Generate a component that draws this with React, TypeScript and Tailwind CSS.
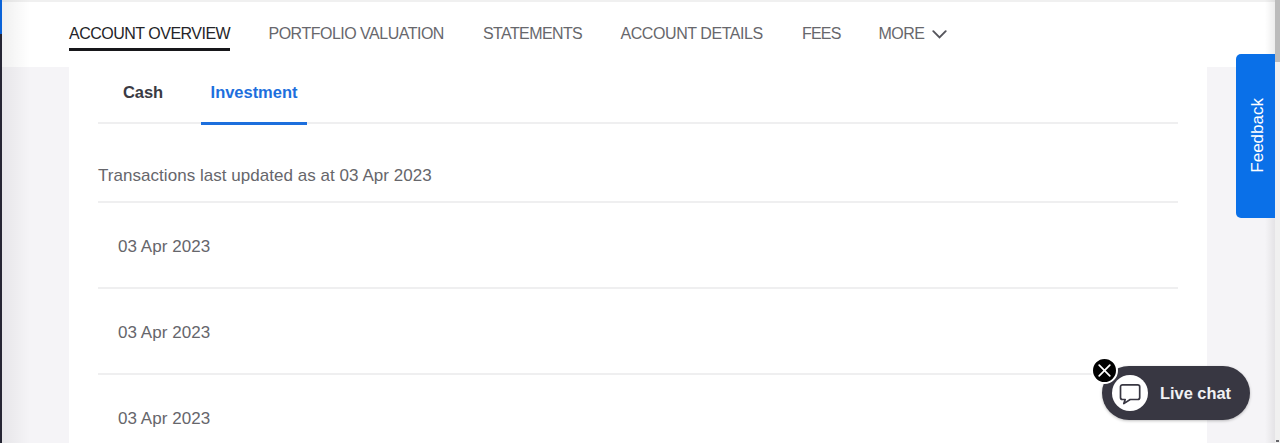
const navItems = [
  { label: "ACCOUNT OVERVIEW", style: "w-[161px] tracking-[-0.5px]" },
  { label: "PORTFOLIO VALUATION", style: "w-[176px] tracking-[-0.5px]" },
  { label: "STATEMENTS", style: "w-[99px] tracking-[-0.6px]" },
  { label: "ACCOUNT DETAILS", style: "w-[143px] tracking-[-0.43px]" },
  { label: "FEES", style: "w-[39px] tracking-[-0.8px]" },
];

const transactions = ["03 Apr 2023", "03 Apr 2023", "03 Apr 2023"];

const Header = () => (
  <header className="h-[67px] shrink-0 border-t-2 border-[#f0f0f0] bg-white pl-[69px]">
    <nav className="flex gap-[38.5px] pt-5 text-[16px] leading-6 text-[#67676c]">
      {navItems.map((item, i) => (
        <a
          key={item.label}
          className={`h-[29px] whitespace-nowrap ${item.style} ${
            i === 0 ? "border-b-3 border-[#17171a] text-[#242428]" : ""
          }`}
        >
          {item.label}
        </a>
      ))}
      <button className="-ml-px flex h-6 items-center gap-[7px] tracking-[-0.5px]">
        MORE
        <svg
          width="15"
          height="9"
          viewBox="0 0 15 9"
          fill="none"
          stroke="#55555c"
          strokeWidth="1.9"
          strokeLinecap="round"
        >
          <path d="M1.300 1.200 7.500 7.500l6.200-6.300" />
        </svg>
      </button>
    </nav>
  </header>
);

const Tabs = () => (
  <div className="flex h-[57px] border-b-2 border-[#efeff0] text-[16.5px] font-bold tracking-[-0.1px]">
    <button className="flex h-[57px] w-[103px] justify-start pl-[25px] pt-[13px] leading-6 text-[#3a3a43]">
      Cash
    </button>
    <button className="flex h-[58px] w-[106px] justify-center border-b-3 border-[#1d6fdd] pt-[13px] leading-6 tracking-[-0.03px] text-[#1d6fdd]">
      Investment
    </button>
  </div>
);

const Feedback = () => (
  <button className="absolute right-[5px] top-[54px] flex h-[164px] w-[39px] items-center justify-center rounded-l-[5px] bg-[#0a70e8] pl-1 text-white">
    <span className="rotate-180 pt-[2px] text-[17px] leading-5 [writing-mode:vertical-rl]">
      Feedback
    </span>
  </button>
);

const LiveChat = () => (
  <div className="absolute left-[1102px] top-[366px] flex h-[54px] w-[148px] items-center rounded-full bg-[#383742] pl-[10px] shadow-[0_1px_3px_rgba(0,0,0,0.25)]">
    <div className="flex h-9 w-9 items-center justify-center rounded-full bg-white">
      <svg
        width="24"
        height="24"
        viewBox="0 0 24 24"
        fill="none"
        stroke="#383742"
        strokeWidth="1.7"
        strokeLinejoin="round"
      >
        <path d="M4.500 3.800h15.200a2 2 0 0 1 2 2v10.700a2 2 0 0 1-2 2h-7.500L5.800 22.600l1.400-4.100H4.500a2 2 0 0 1-2-2V5.800a2 2 0 0 1 2-2z" />
      </svg>
    </div>
    <span className="ml-3 whitespace-nowrap text-[16.4px] font-bold text-[#f1f1f4]">
      Live chat
    </span>
    <button className="absolute -left-[11px] -top-[9px] flex h-[27px] w-[27px] items-center justify-center rounded-full border-2 border-white bg-black">
      <svg
        width="13"
        height="13"
        viewBox="0 0 13 13"
        fill="none"
        stroke="white"
        strokeWidth="1.7"
        strokeLinecap="round"
      >
        <path d="M1.200 1.200 11.800 11.800M11.800 1.200 1.200 11.800" />
      </svg>
    </button>
  </div>
);

const App = () => {
  return (
    <div className="relative flex h-[443px] w-[1280px] flex-col overflow-hidden bg-[#f5f4f7] font-['Liberation_Sans',Arial,sans-serif]">
      <Header />
      <main className="ml-[69px] w-[1138px] flex-1 bg-white px-[29px] text-[17px] text-[#66666b]">
        <Tabs />
        <p className="flex h-[79px] items-end border-b-2 border-[#efeff0] pb-[13px] leading-6 tracking-[0.04px]">
          Transactions last updated as at 03 Apr 2023
        </p>
        {transactions.map((date, i) => (
          <div
            key={i}
            className="flex h-[86px] items-center border-b-2 border-[#efeff0] pl-5 pt-[3px] tracking-[0.04px]"
          >
            {date}
          </div>
        ))}
      </main>

      {/* window edge and its soft shadow */}
      <div className="absolute left-0 top-0 flex h-full w-[30px]">
        <div className="flex w-[1.5px] flex-col bg-[#252533]">
          <div className="h-[34px] bg-[#0b63d8]" />
        </div>
        <div className="flex-1 bg-linear-to-r from-black/6 to-transparent" />
      </div>
      <div className="absolute right-[5px] top-0 h-full w-[10px] bg-linear-to-l from-black/7 to-transparent" />
      <div className="absolute right-0 top-0 flex h-full w-[5px] flex-col items-center justify-between bg-[#f0f0f0] pb-px">
        <div className="h-[62px] w-full bg-[#bcbcbc]" />
        <div className="h-[2px] w-[3px] bg-[#66666b]" />
      </div>

      <Feedback />
      <LiveChat />
    </div>
  );
};

export default App;
